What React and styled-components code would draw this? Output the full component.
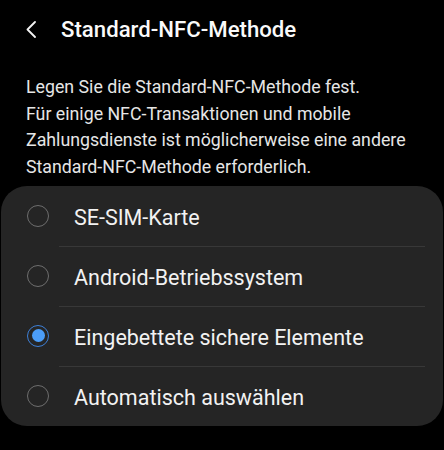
import React from 'react';
import styled, { createGlobalStyle } from 'styled-components';

const GlobalStyle = createGlobalStyle`
  html, body {
    margin: 0;
    padding: 0;
    background: #000;
  }
  body {
    font-family: Roboto, "Noto Sans", sans-serif;
    -webkit-font-smoothing: antialiased;
  }
`;

const Screen = styled.div`
  width: 444px;
  height: 450px;
  background: #000;
  color: #fff;
  overflow: hidden;
`;

const Header = styled.header`
  height: 58px;
  display: flex;
  align-items: center;
  padding: 0 0 0 24px;
  box-sizing: border-box;
`;

const BackButton = styled.button`
  width: 14px;
  height: 20px;
  padding: 0;
  border: none;
  background: none;
  display: flex;
  align-items: center;
  justify-content: center;
  margin-right: 23px;
`;

const Title = styled.h1`
  margin: 0;
  font-size: 22.2px;
  font-weight: 500;
  color: #fafafa;
`;

const Description = styled.p`
  margin: 16px 0 0;
  padding: 0 20px 0 26px;
  font-size: 17.75px;
  line-height: 26.7px;
  color: #e6e6e6;
`;

const Card = styled.ul`
  list-style: none;
  margin: 5px 1px 0;
  padding: 0;
  background: #252525;
  border-radius: 26px;
  overflow: hidden;
`;

const Row = styled.li`
  height: 60px;
  display: flex;
  align-items: center;
  position: relative;
  padding-left: 26px;

  & + &::before {
    content: '';
    position: absolute;
    top: 0;
    left: 58px;
    right: 18px;
    height: 1px;
    background: #383838;
  }
`;

const Radio = styled.span`
  width: 22px;
  height: 22px;
  box-sizing: border-box;
  border-radius: 50%;
  border: 1.5px solid ${(p) => (p.$checked ? '#3d7fd6' : '#6e6e6e')};
  display: flex;
  align-items: center;
  justify-content: center;
  margin-right: 25px;
  flex-shrink: 0;

  &::after {
    content: '';
    display: ${(p) => (p.$checked ? 'block' : 'none')};
    width: 13px;
    height: 13px;
    border-radius: 50%;
    background: #4b9df8;
  }
`;

const Label = styled.span`
  font-size: 21.5px;
  color: #f2f2f2;
  padding-top: 3px;
`;

const options = [
  'SE-SIM-Karte',
  'Android-Betriebssystem',
  'Eingebettete sichere Elemente',
  'Automatisch auswählen',
];

export default function App() {
  const selected = 2;
  return (
    <Screen>
      <GlobalStyle />
      <Header>
        <BackButton aria-label="Zurück">
          <svg width="10" height="17" viewBox="0 0 10 17">
            <path d="M9 1 L1.5 8.5 L9 16" fill="none" stroke="#f2f2f2" strokeWidth="1.8" strokeLinecap="round" strokeLinejoin="round" />
          </svg>
        </BackButton>
        <Title>Standard-NFC-Methode</Title>
      </Header>
      <Description>
        Legen Sie die Standard-NFC-Methode fest.
        <br />
        Für einige NFC-Transaktionen und mobile
        <br />
        Zahlungsdienste ist möglicherweise eine andere
        <br />
        Standard-NFC-Methode erforderlich.
      </Description>
      <Card>
        {options.map((o, i) => (
          <Row key={o}>
            <Radio $checked={i === selected} />
            <Label>{o}</Label>
          </Row>
        ))}
      </Card>
    </Screen>
  );
}
